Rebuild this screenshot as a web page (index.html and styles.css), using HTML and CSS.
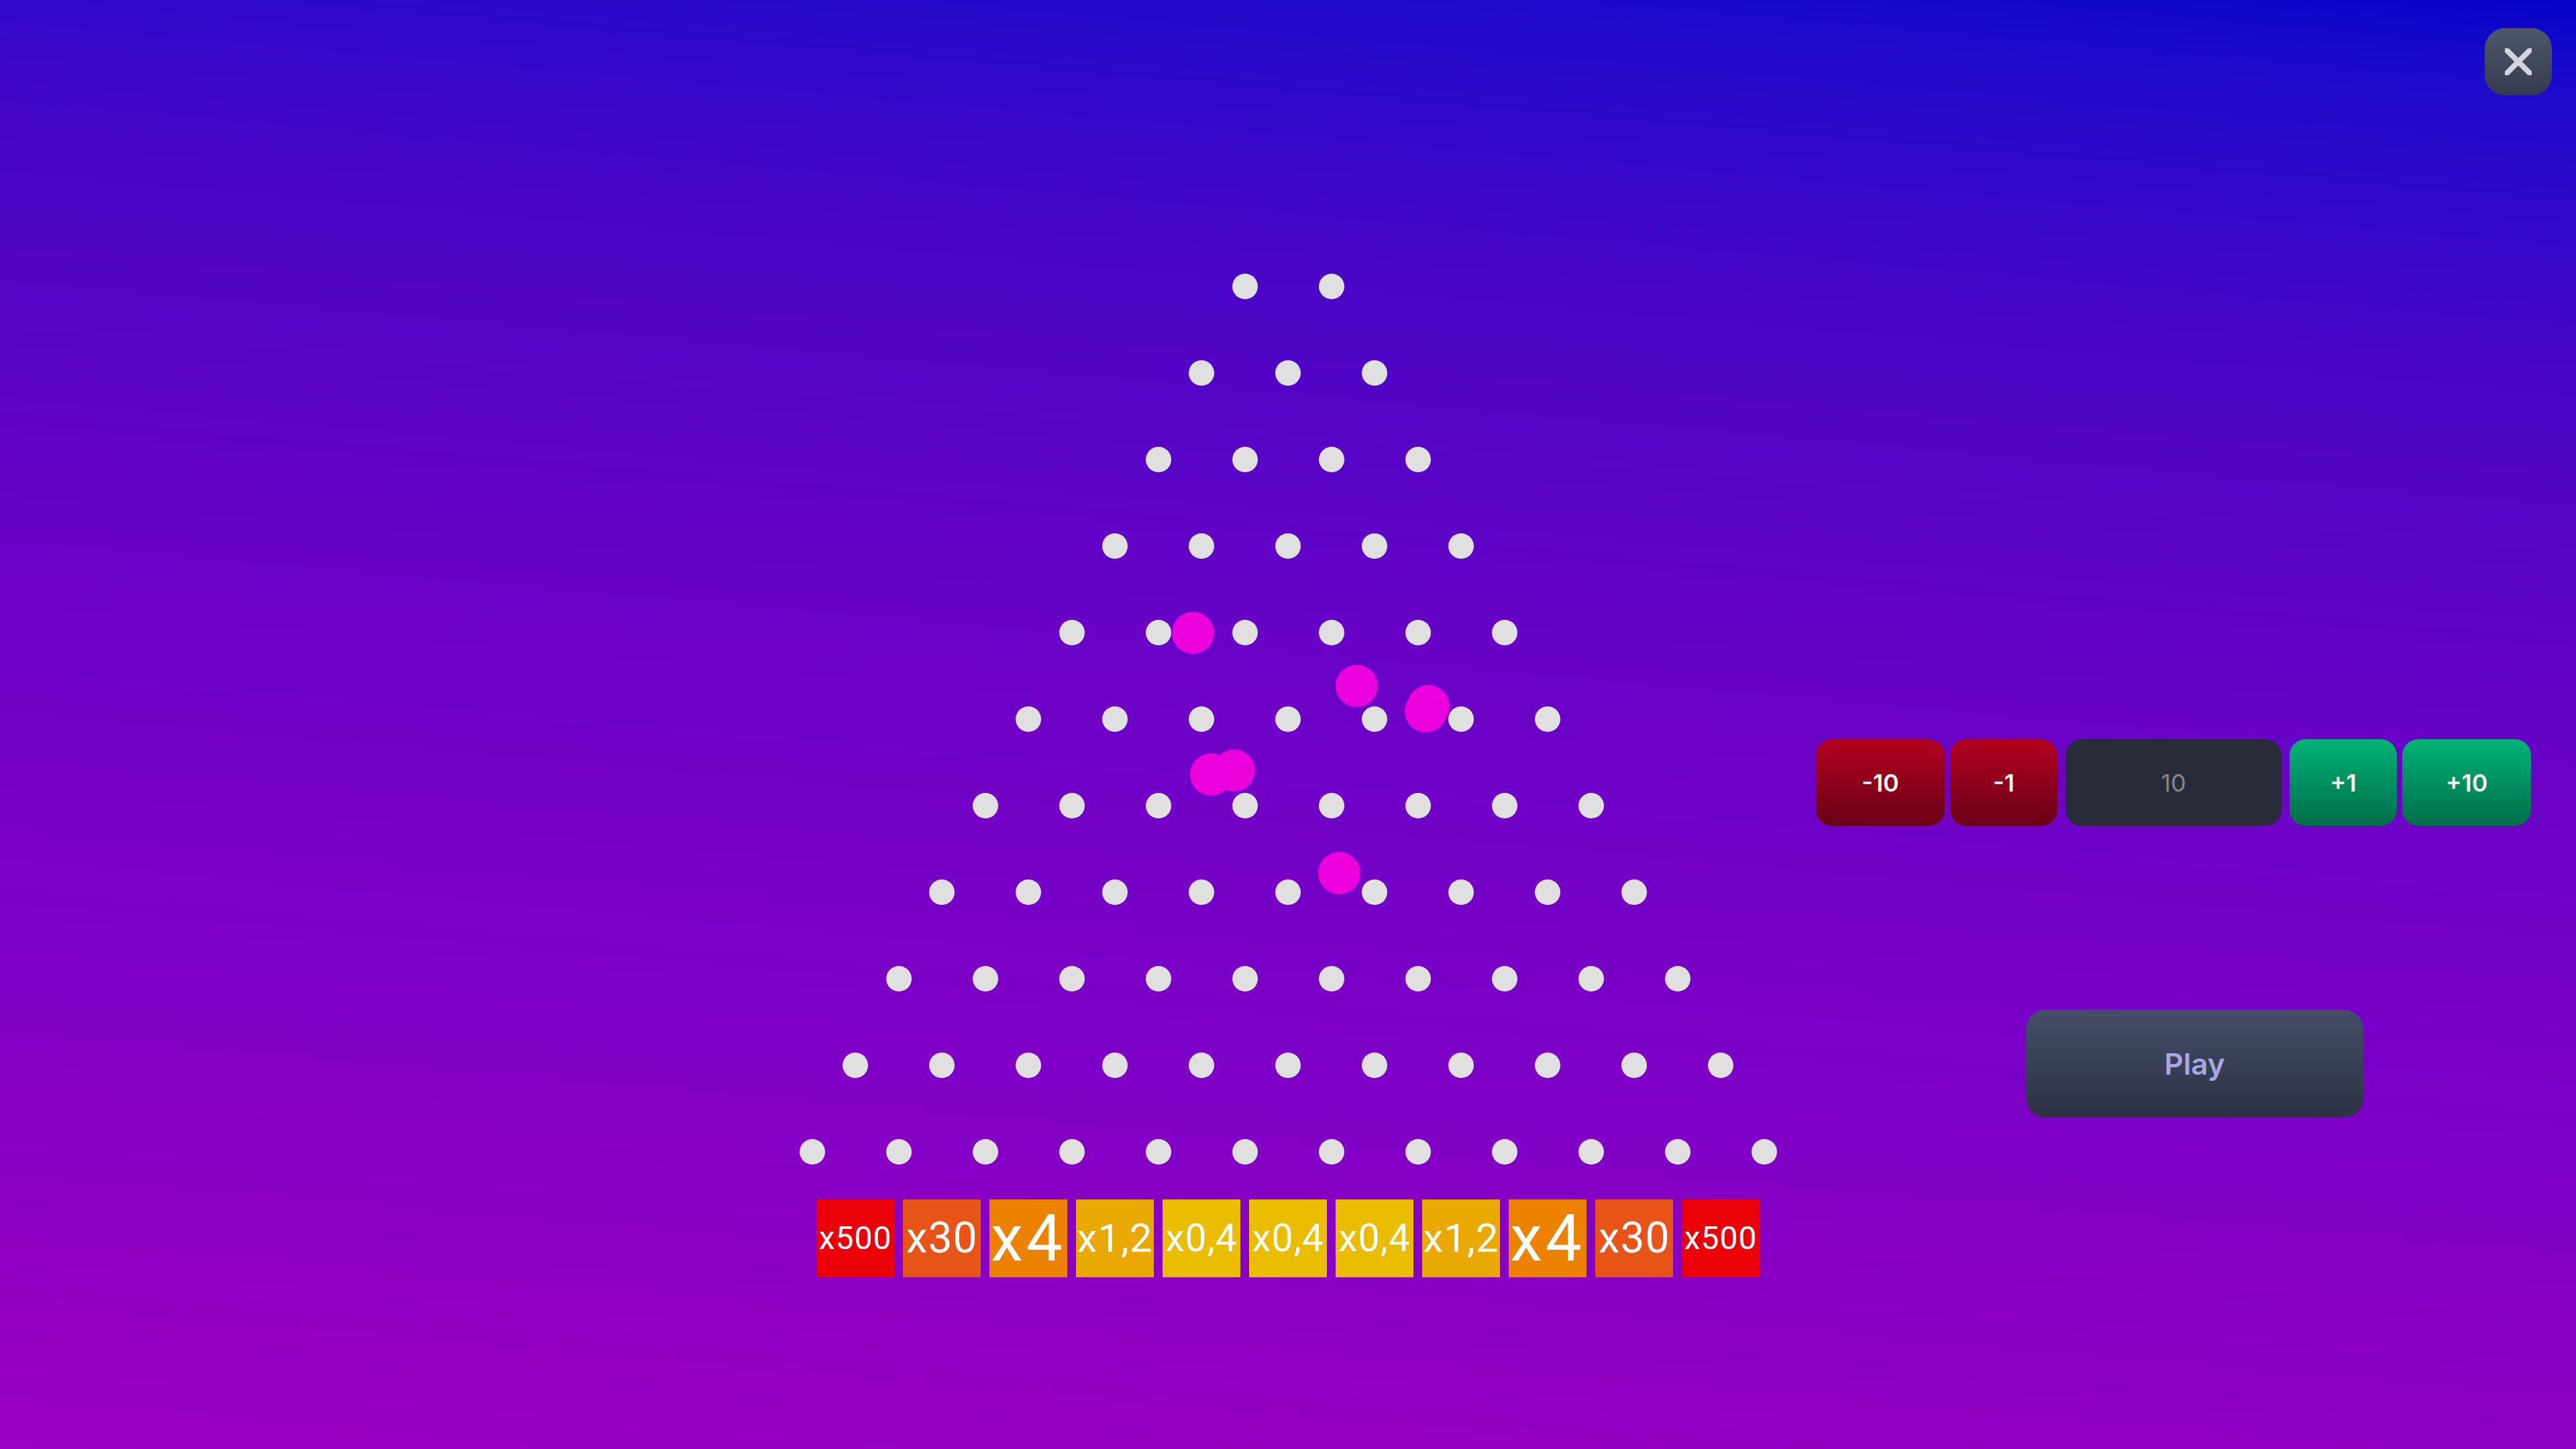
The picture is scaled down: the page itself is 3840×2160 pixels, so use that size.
FILE: index.html
```html
<!DOCTYPE html>
<html lang="en">
<head>
<meta charset="utf-8">
<title>Plinko</title>
<link rel="stylesheet" href="styles.css">
</head>
<body>
<div class="app">
  <div class="side"></div>
  <main class="board">
    <div class="row"><span class="peg"></span><span class="peg"></span></div>
    <div class="row"><span class="peg"></span><span class="peg"></span><span class="peg"></span></div>
    <div class="row"><span class="peg"></span><span class="peg"></span><span class="peg"></span><span class="peg"></span></div>
    <div class="row"><span class="peg"></span><span class="peg"></span><span class="peg"></span><span class="peg"></span><span class="peg"></span></div>
    <div class="row"><span class="peg"></span><span class="peg"></span><span class="peg"></span><span class="peg"></span><span class="peg"></span><span class="peg"></span></div>
    <div class="row"><span class="peg"></span><span class="peg"></span><span class="peg"></span><span class="peg"></span><span class="peg"></span><span class="peg"></span><span class="peg"></span></div>
    <div class="row"><span class="peg"></span><span class="peg"></span><span class="peg"></span><span class="peg"></span><span class="peg"></span><span class="peg"></span><span class="peg"></span><span class="peg"></span></div>
    <div class="row"><span class="peg"></span><span class="peg"></span><span class="peg"></span><span class="peg"></span><span class="peg"></span><span class="peg"></span><span class="peg"></span><span class="peg"></span><span class="peg"></span></div>
    <div class="row"><span class="peg"></span><span class="peg"></span><span class="peg"></span><span class="peg"></span><span class="peg"></span><span class="peg"></span><span class="peg"></span><span class="peg"></span><span class="peg"></span><span class="peg"></span></div>
    <div class="row"><span class="peg"></span><span class="peg"></span><span class="peg"></span><span class="peg"></span><span class="peg"></span><span class="peg"></span><span class="peg"></span><span class="peg"></span><span class="peg"></span><span class="peg"></span><span class="peg"></span></div>
    <div class="row"><span class="peg"></span><span class="peg"></span><span class="peg"></span><span class="peg"></span><span class="peg"></span><span class="peg"></span><span class="peg"></span><span class="peg"></span><span class="peg"></span><span class="peg"></span><span class="peg"></span><span class="peg"></span></div>
    <div class="row buckets">
      <div class="bucket b-red t-500">x500</div>
      <div class="bucket b-orange t-30">x30</div>
      <div class="bucket b-amber t-4">x4</div>
      <div class="bucket b-gold t-12">x1,2</div>
      <div class="bucket b-yellow t-04">x0,4</div>
      <div class="bucket b-yellow t-04">x0,4</div>
      <div class="bucket b-yellow t-04">x0,4</div>
      <div class="bucket b-gold t-12">x1,2</div>
      <div class="bucket b-amber t-4">x4</div>
      <div class="bucket b-orange t-30">x30</div>
      <div class="bucket b-red t-500">x500</div>
    </div>

    <span class="ball" style="left:600.5px;top:911.8px"></span>
    <span class="ball" style="left:844.8px;top:990.6px"></span>
    <span class="ball" style="left:948px;top:1029.2px"></span>
    <span class="ball" style="left:952px;top:1021px"></span>
    <span class="ball" style="left:628.3px;top:1122.8px"></span>
    <span class="ball" style="left:661.7px;top:1117.1px"></span>
    <span class="ball" style="left:819px;top:1269.8px"></span>
  </main>
  <aside class="panel">
    <div class="bet-row">
      <button class="btn btn-red w-wide">-10</button>
      <button class="btn btn-red w-narrow">-1</button>
      <div class="bet-field">10</div>
      <button class="btn btn-green w-narrow">+1</button>
      <button class="btn btn-green w-wide">+10</button>
    </div>
    <div class="play-wrap">
      <button class="play">Play</button>
    </div>
  </aside>
  <button class="close" aria-label="Close">
    <svg viewBox="0 0 40 40" width="40" height="40">
      <path d="M2 2 L38 38 M38 2 L2 38" stroke="#d1d5dc" stroke-width="8" stroke-linecap="round" fill="none"/>
    </svg>
  </button>
</div>
</body>
</html>
```

FILE: styles.css
```css
* { box-sizing: border-box; }

html, body {
  margin: 0;
  padding: 0;
  height: 100%;
}

body {
  font-family: "Inter", "Liberation Sans", sans-serif;
  overflow: hidden;
}

.app {
  position: relative;
  height: 100vh;
  display: grid;
  grid-template-columns: 1fr 1548px 1fr;
  background: linear-gradient(185deg,
    #0404c6 0%,
    #1c0acc 5%,
    #4806c6 22%,
    #6e02c6 50%,
    #8000c6 73%,
    #9c00c0 100%);
}

.board {
  position: relative;
  padding-top: 362px;
  display: flex;
  flex-direction: column;
}

.row {
  height: 129px;
  display: flex;
  justify-content: center;
  align-items: center;
  gap: 91px;
}

.peg {
  width: 38px;
  height: 38px;
  border-radius: 50%;
  background: #e0e0e0;
  flex: none;
}

.buckets {
  gap: 13px;
}

.bucket {
  width: 116px;
  height: 116px;
  flex: none;
  display: flex;
  align-items: center;
  justify-content: center;
  color: #ffffff;
  font-family: "Roboto", "Liberation Sans", sans-serif;
  font-weight: 400;
  white-space: nowrap;
  overflow: visible;
  letter-spacing: 1px;
}

.b-red { background: #eb000a; }
.b-orange { background: #e85418; }
.b-amber { background: #ec8200; }
.b-gold { background: #eaa802; }
.b-yellow { background: #ebbd00; }

.t-500 { font-size: 48px; }
.t-30 { font-size: 64px; }
.t-4 { font-size: 96px; letter-spacing: 5px; }
.t-12 { font-size: 60px; }
.t-04 { font-size: 57px; }

.ball {
  position: absolute;
  width: 63px;
  height: 63px;
  border-radius: 50%;
  background: #ec00dc;
}

.panel {
  padding: 1102px 4px 0 13px;
  display: flex;
  flex-direction: column;
}

.bet-row {
  display: flex;
  gap: 8px;
  height: 129px;
}

.btn {
  border: none;
  margin: 0;
  padding: 0;
  height: 129px;
  border-radius: 24px;
  color: #f2f2f2;
  font-family: "Inter", "Liberation Sans", sans-serif;
  font-weight: 600;
  font-size: 36px;
  display: flex;
  align-items: center;
  justify-content: center;
}

.w-wide { width: 192px; }
.w-narrow { width: 160px; }

.btn-red {
  background: linear-gradient(180deg, #b2001f 0%, #6a0016 100%);
}

.btn-green {
  background: linear-gradient(180deg, #00b476 0%, #006d4b 100%);
}

.bet-field {
  width: 322px;
  height: 129px;
  margin: 0 4px;
  border-radius: 24px;
  background: #282c3a;
  color: #85868c;
  font-family: "Inter", "Liberation Sans", sans-serif;
  font-weight: 400;
  font-size: 36px;
  display: flex;
  align-items: center;
  justify-content: center;
}

.play-wrap {
  margin-top: 274px;
  display: flex;
  justify-content: center;
}

.play {
  width: 503px;
  height: 161px;
  border: none;
  margin: 0;
  padding: 0;
  border-radius: 30px;
  background: linear-gradient(180deg, #454e66 0%, #2c3245 100%);
  color: #a9a6e0;
  font-family: "Inter", "Liberation Sans", sans-serif;
  font-weight: 600;
  font-size: 44px;
}

.close {
  position: absolute;
  top: 42px;
  right: 36px;
  width: 100px;
  height: 100px;
  border: none;
  padding: 0;
  border-radius: 30px;
  background: linear-gradient(180deg, #4d566b 0%, #363c4e 100%);
  display: flex;
  align-items: center;
  justify-content: center;
}
```
